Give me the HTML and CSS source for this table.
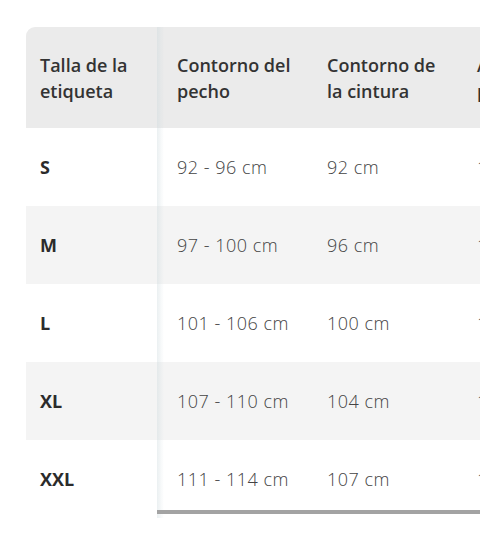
FILE: index.html
```html
<!DOCTYPE html>
<html lang="es">
<head>
<meta charset="utf-8">
<link rel="stylesheet" href="styles.css">
</head>
<body>
<div class="wrap">
  <div class="scroller">
    <table class="sizes">
      <thead>
        <tr>
          <th class="first">Talla de la etiqueta</th>
          <th>Contorno del pecho</th>
          <th>Contorno de la cintura</th>
          <th>Altura de la persona</th>
        </tr>
      </thead>
      <tbody>
        <tr><td class="first">S</td><td>92 - 96 cm</td><td>92 cm</td><td>170 - 176 cm</td></tr>
        <tr class="alt"><td class="first">M</td><td>97 - 100 cm</td><td>96 cm</td><td>176 - 182 cm</td></tr>
        <tr><td class="first">L</td><td>101 - 106 cm</td><td>100 cm</td><td>182 - 188 cm</td></tr>
        <tr class="alt"><td class="first">XL</td><td>107 - 110 cm</td><td>104 cm</td><td>188 - 194 cm</td></tr>
        <tr><td class="first">XXL</td><td>111 - 114 cm</td><td>107 cm</td><td>194 - 200 cm</td></tr>
      </tbody>
    </table>
  </div>
  <div class="thumb"></div>
</div>
</body>
</html>
```
FILE: styles.css
```css
html, body {
  margin: 0;
  padding: 0;
  background: #ffffff;
}
body {
  font-family: "Open Sans", "Liberation Sans", sans-serif;
  color: #333333;
  padding: 27px 0 0 26px;
}
.wrap {
  position: relative;
  width: 454px;
  overflow: hidden;
}
.scroller {
  overflow: hidden;
  padding-bottom: 8px;
}
.sizes {
  border-collapse: separate;
  border-spacing: 0;
  table-layout: fixed;
  width: 581px;
}
.sizes th, .sizes td {
  width: 150px;
  text-align: left;
  padding: 0 12px 0 20px;
  box-sizing: border-box;
  vertical-align: middle;
}
.sizes .first {
  width: 131px;
  padding-left: 14px;
  position: sticky;
  left: 0;
  z-index: 2;
}
.sizes .first::after {
  content: "";
  position: absolute;
  top: 0;
  bottom: 0;
  right: -7px;
  width: 7px;
  background: linear-gradient(to right, rgba(205, 218, 222, 0.4), rgba(205, 218, 222, 0));
}
.sizes th {
  background: #ebebeb;
  height: 101px;
  font-size: 18px;
  font-weight: 600;
  line-height: 26px;
  color: #333333;
}
.sizes th.first {
  border-top-left-radius: 9px;
}
.sizes td {
  height: 78px;
  font-size: 18px;
  font-weight: 300;
  letter-spacing: 0.5px;
  color: #444444;
  background: #ffffff;
}
.sizes tr.alt td {
  background: #f4f4f4;
}
.sizes td.first {
  font-weight: 700;
  letter-spacing: 0;
  color: #2b2b2b;
}
.thumb {
  position: absolute;
  left: 131px;
  right: 0;
  bottom: 12px;
  height: 4px;
  background: #a3a3a3;
  z-index: 3;
}
```
